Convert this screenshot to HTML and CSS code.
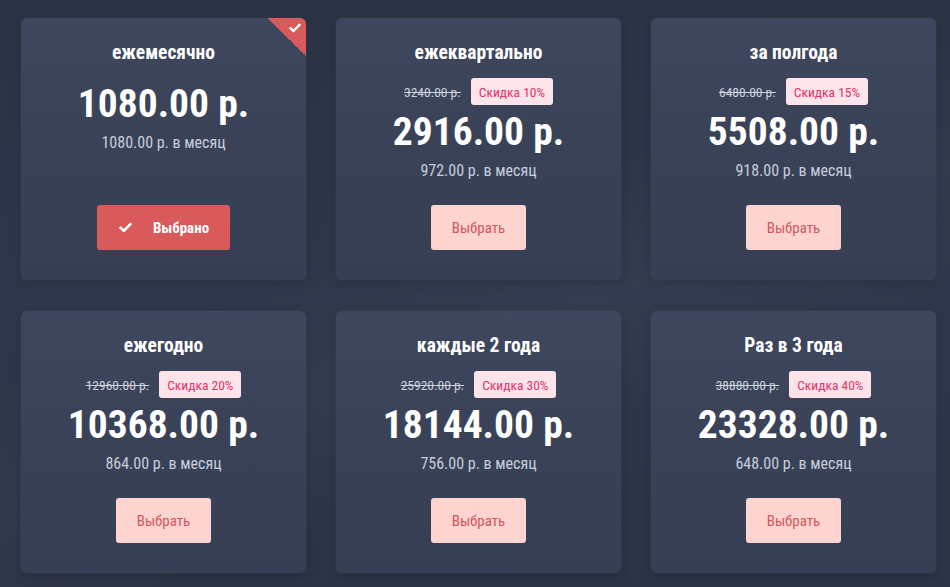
FILE: index.html
```html
<!DOCTYPE html>
<html lang="ru">
<head>
<meta charset="utf-8">
<link rel="stylesheet" href="styles.css">
</head>
<body>
<div class="page">
  <div class="grid">
    <div class="card card--active">
      <div class="ribbon">
        <svg class="ribbon-check" viewBox="0 0 12 10" width="12" height="10"><path d="M1.5 5.2 L4.5 8 L10.5 1.8" fill="none" stroke="#fff" stroke-width="2.4" stroke-linecap="round" stroke-linejoin="round"/></svg>
      </div>
      <div class="title">ежемесячно</div>
      <div class="price price--nodisc">1080.00 р.</div>
      <div class="per">1080.00 р. в месяц</div>
      <button class="btn btn--selected">
        <svg class="btn-check" viewBox="0 0 12 10" width="13" height="11"><path d="M1.5 5.2 L4.5 8 L10.5 1.8" fill="none" stroke="#fff" stroke-width="2.4" stroke-linecap="round" stroke-linejoin="round"/></svg>
        <span>Выбрано</span>
      </button>
    </div>

    <div class="card">
      <div class="title">ежеквартально</div>
      <div class="disc"><s class="old">3240.00 р.</s><span class="badge">Скидка 10%</span></div>
      <div class="price">2916.00 р.</div>
      <div class="per">972.00 р. в месяц</div>
      <button class="btn">Выбрать</button>
    </div>

    <div class="card">
      <div class="title">за полгода</div>
      <div class="disc"><s class="old">6480.00 р.</s><span class="badge">Скидка 15%</span></div>
      <div class="price">5508.00 р.</div>
      <div class="per">918.00 р. в месяц</div>
      <button class="btn">Выбрать</button>
    </div>

    <div class="card">
      <div class="title">ежегодно</div>
      <div class="disc"><s class="old">12960.00 р.</s><span class="badge">Скидка 20%</span></div>
      <div class="price">10368.00 р.</div>
      <div class="per">864.00 р. в месяц</div>
      <button class="btn">Выбрать</button>
    </div>

    <div class="card">
      <div class="title">каждые 2 года</div>
      <div class="disc"><s class="old">25920.00 р.</s><span class="badge">Скидка 30%</span></div>
      <div class="price">18144.00 р.</div>
      <div class="per">756.00 р. в месяц</div>
      <button class="btn">Выбрать</button>
    </div>

    <div class="card">
      <div class="title">Раз в 3 года</div>
      <div class="disc"><s class="old">38880.00 р.</s><span class="badge">Скидка 40%</span></div>
      <div class="price">23328.00 р.</div>
      <div class="per">648.00 р. в месяц</div>
      <button class="btn">Выбрать</button>
    </div>
  </div>
</div>
</body>
</html>
```
FILE: styles.css
```css
* { box-sizing: border-box; }
html, body { margin: 0; height: 100%; }
body {
  font-family: "Roboto Condensed", Roboto, "Liberation Sans", sans-serif;
  font-stretch: condensed;
  background: #2d3548;
  background-image:
    linear-gradient(160deg, rgba(255,255,255,0) 40%, rgba(255,255,255,0.025) 55%, rgba(255,255,255,0) 70%),
    linear-gradient(180deg, #2b3345 0%, #2f384b 50%, #2c3446 100%);
  color: #fff;
  overflow: hidden;
}
.page {
  padding: 18px 14px 0 21px;
}
.grid {
  display: grid;
  grid-template-columns: repeat(3, 285px);
  grid-auto-rows: 262px;
  column-gap: 30px;
  row-gap: 31px;
}
.card {
  position: relative;
  overflow: hidden;
  display: flex;
  flex-direction: column;
  align-items: center;
  padding: 24px 10px 30px;
  border-radius: 6px;
  background: linear-gradient(180deg, #3e475d 0%, #394257 45%, #363f54 100%);
  box-shadow: 0 0 0 1px rgba(255,255,255,0.03), 0 2px 10px rgba(0,0,0,0.18);
}
.title {
  font-size: 19.5px;
  line-height: 22px;
  font-weight: 700;
  color: #fff;
}
.disc {
  margin-top: 14px;
  display: flex;
  align-items: center;
  gap: 10px;
  height: 27px;
}
.old {
  font-size: 13.5px;
  font-weight: 450;
  color: #cdd2dd;
  text-decoration: line-through;
  text-decoration-thickness: 1px;
}
.badge {
  display: inline-flex;
  align-items: center;
  height: 27px;
  padding: 0 8px;
  border-radius: 3px;
  background: #fde4ea;
  color: #e2346c;
  font-size: 13.5px;
  font-weight: 430;
}
.price {
  margin-top: 5px;
  font-size: 39.5px;
  line-height: 44px;
  font-weight: 700;
  color: #fff;
}
.price--nodisc { margin-top: 18px; }
.per {
  margin-top: 7px;
  font-size: 16px;
  line-height: 20px;
  font-weight: 430;
  color: #c8cede;
}
.btn {
  margin-top: auto;
  height: 45px;
  padding: 0 21px;
  border: 0;
  border-radius: 3px;
  background: #fdd4d0;
  color: #d2585b;
  font-family: inherit;
  font-stretch: condensed;
  font-size: 15px;
  font-weight: 430;
  display: inline-flex;
  align-items: center;
  cursor: pointer;
}
.btn--selected {
  background: #d85a5a;
  color: #fff;
  font-weight: 700;
  padding: 0 21px 0 22px;
  gap: 21px;
}
.ribbon {
  position: absolute;
  top: 0;
  right: 0;
  width: 38px;
  height: 38px;
  background: linear-gradient(225deg, #d85a5a 0 50%, transparent 50%);
}
.ribbon-check {
  position: absolute;
  top: 5px;
  right: 5px;
}
```
